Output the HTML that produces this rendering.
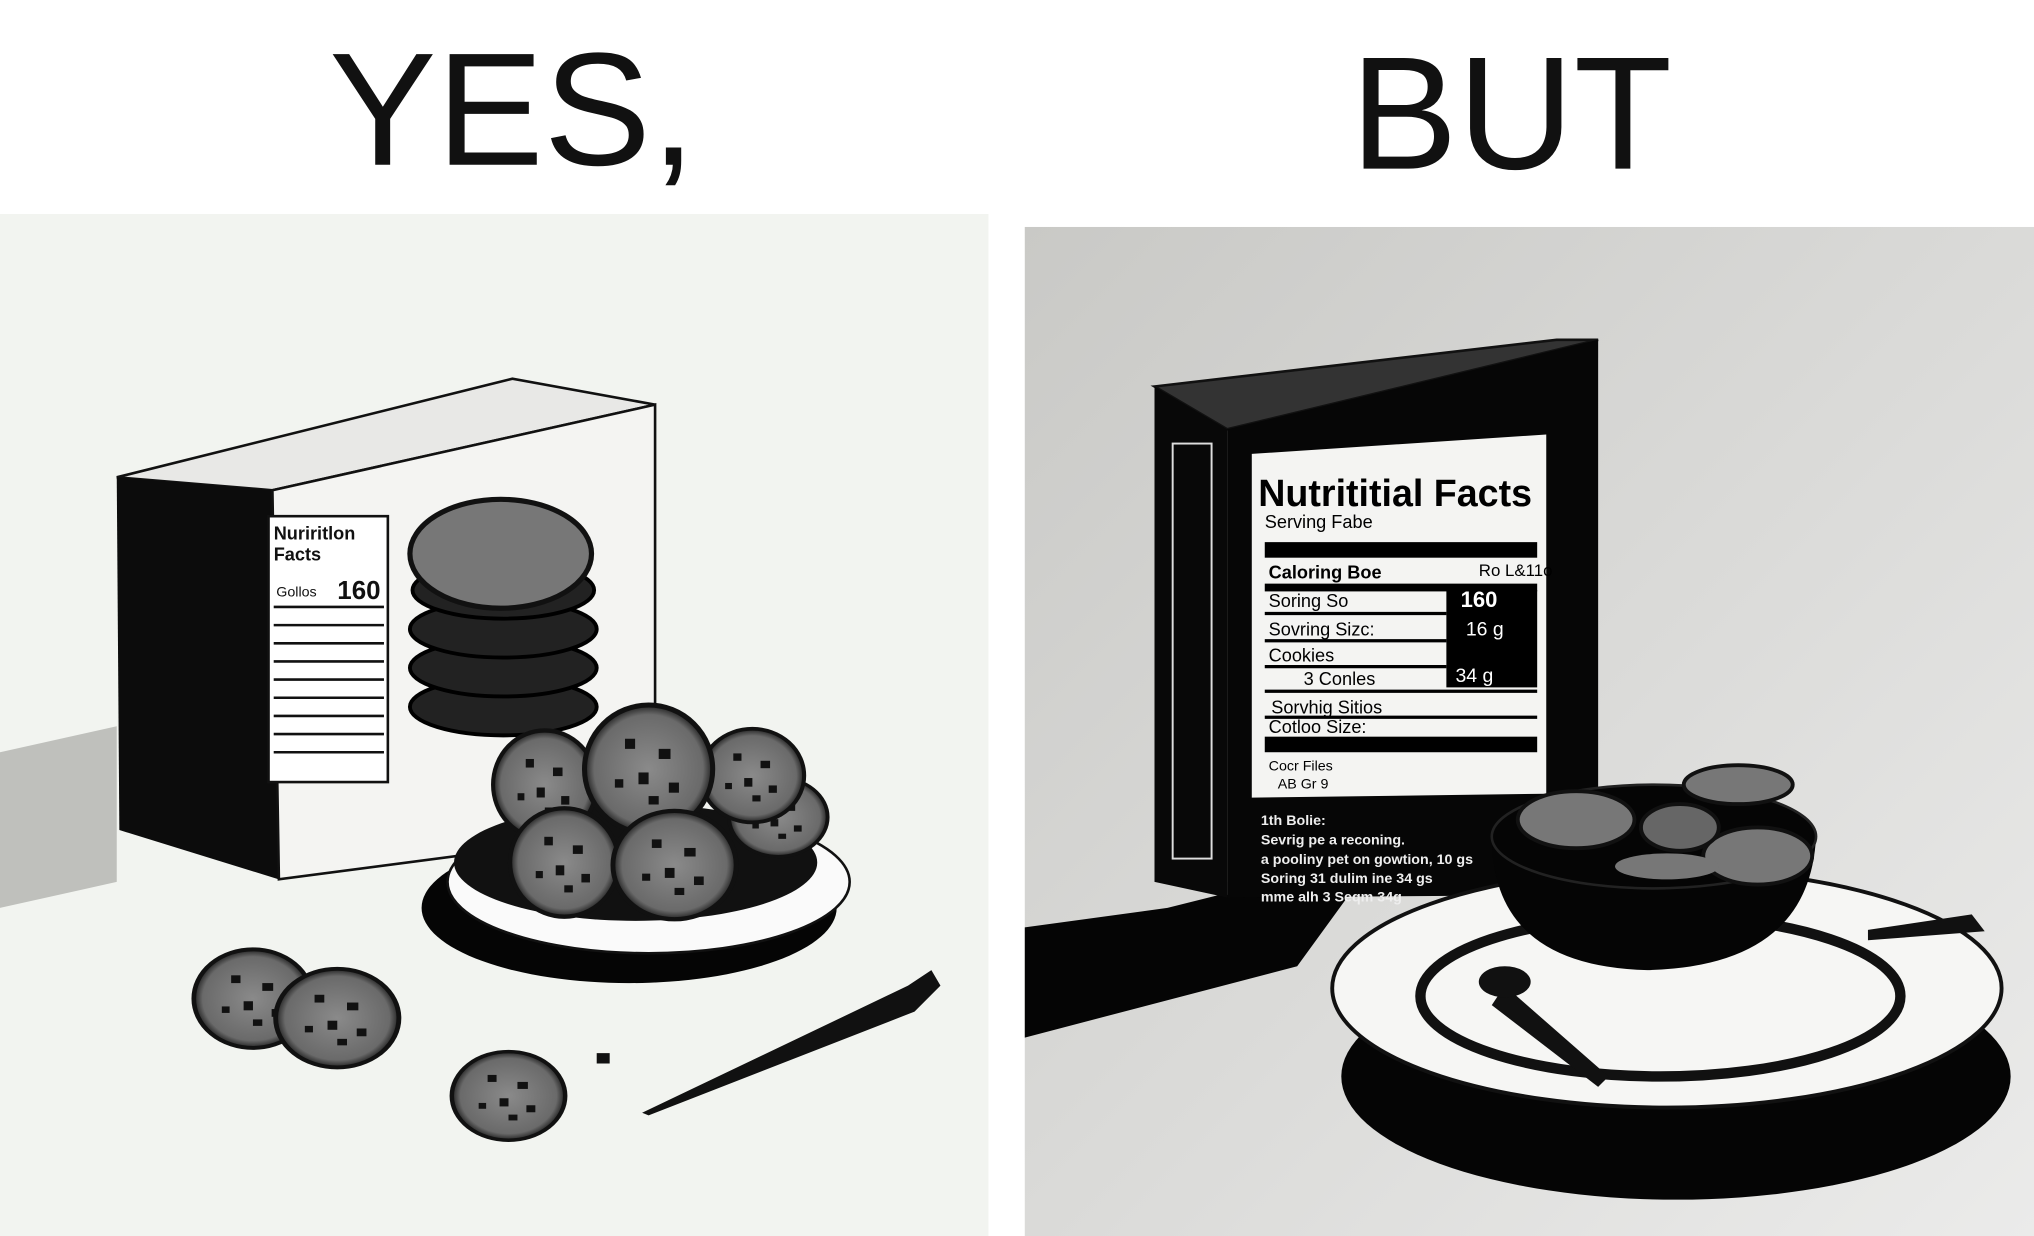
<!DOCTYPE html>
<html><head><meta charset="utf-8"><style>
html,body{margin:0;padding:0;background:#fff;overflow:hidden}
svg{display:block}
</style></head><body>
<svg width="2034" height="1236" viewBox="0 0 1568 953" preserveAspectRatio="none" xmlns="http://www.w3.org/2000/svg" font-family="Liberation Sans, sans-serif">
<defs>
<linearGradient id="rg" x1="0" y1="0" x2="1" y2="1"><stop offset="0" stop-color="#c9c9c6"/><stop offset="1" stop-color="#ebebea"/></linearGradient>
<radialGradient id="ck" cx="0.5" cy="0.5" r="0.5"><stop offset="0" stop-color="#8a8a8a"/><stop offset="0.85" stop-color="#6a6a6a"/><stop offset="1" stop-color="#222"/></radialGradient>
<g id="cookie"><circle r="38" fill="url(#ck)" stroke="#111" stroke-width="3"/><rect x="-14" y="-18" width="6" height="6" fill="#111"/><rect x="6" y="-12" width="7" height="6" fill="#111"/><rect x="-6" y="2" width="6" height="7" fill="#111"/><rect x="12" y="8" width="6" height="6" fill="#111"/><rect x="-20" y="6" width="5" height="5" fill="#111"/><rect x="0" y="16" width="6" height="5" fill="#111"/></g>
</defs>
<rect width="1568" height="953" fill="#fff"/>
<text x="395" y="127" font-size="124" text-anchor="middle" fill="#111">YES,</text>
<text x="1165" y="130" font-size="124" text-anchor="middle" fill="#111">BUT</text>

<rect x="0" y="165" width="762" height="788" fill="#f2f4f0"/>
<polygon points="0,580 90,560 90,680 0,700" fill="#bfc0bc"/>
<polygon points="90,368 395,292 505,312 210,378" fill="#e8e8e6" stroke="#111" stroke-width="2"/>
<polygon points="90,368 210,378 215,678 92,640" fill="#0c0c0c"/>
<polygon points="210,378 505,312 505,640 215,678" fill="#f4f4f2" stroke="#111" stroke-width="2"/>
<rect x="207" y="398" width="92" height="205" fill="#fff" stroke="#111" stroke-width="2"/>
<text x="211" y="416" font-size="14" font-weight="bold" fill="#111">Nuriritlon</text>
<text x="211" y="432" font-size="14" font-weight="bold" fill="#111">Facts</text>
<text x="213" y="460" font-size="11" fill="#111">Gollos</text><text x="260" y="462" font-size="20" font-weight="bold" fill="#111">160</text>
<g stroke="#111" stroke-width="2"><line x1="211" y1="468" x2="296" y2="468"/><line x1="211" y1="482" x2="296" y2="482"/><line x1="211" y1="496" x2="296" y2="496"/><line x1="211" y1="510" x2="296" y2="510"/><line x1="211" y1="524" x2="296" y2="524"/><line x1="211" y1="538" x2="296" y2="538"/><line x1="211" y1="552" x2="296" y2="552"/><line x1="211" y1="566" x2="296" y2="566"/><line x1="211" y1="580" x2="296" y2="580"/></g>
<g fill="#222" stroke="#000" stroke-width="3">
<ellipse cx="388" cy="545" rx="72" ry="22"/><ellipse cx="388" cy="515" rx="72" ry="22"/><ellipse cx="388" cy="485" rx="72" ry="22"/><ellipse cx="388" cy="455" rx="70" ry="22"/></g>
<ellipse cx="386" cy="427" rx="70" ry="42" fill="#777" stroke="#111" stroke-width="4"/>
<ellipse cx="485" cy="700" rx="160" ry="58" fill="#050505"/>
<ellipse cx="500" cy="680" rx="155" ry="55" fill="#fafafa" stroke="#111" stroke-width="2"/>
<ellipse cx="490" cy="665" rx="140" ry="45" fill="#111"/>
<use href="#cookie" transform="translate(420,605) scale(1.05,1.1)"/>
<use href="#cookie" transform="translate(600,630) scale(1,0.8)"/>
<use href="#cookie" transform="translate(580,598) scale(1.05,0.95)"/>
<use href="#cookie" transform="translate(500,593) scale(1.3)"/>
<use href="#cookie" transform="translate(435,665) scale(1.1)"/>
<use href="#cookie" transform="translate(520,667) scale(1.25,1.1)"/>
<use href="#cookie" transform="translate(195,770) scale(1.2,1)"/>
<use href="#cookie" transform="translate(260,785) scale(1.25,1)"/>
<use href="#cookie" transform="translate(392,845) scale(1.15,0.9)"/>
<rect x="460" y="812" width="10" height="8" fill="#111"/>
<polygon points="495,858 700,760 718,748 725,760 705,780 500,860" fill="#111"/>

<rect x="790" y="175" width="778" height="778" fill="url(#rg)"/>
<polygon points="790,715 900,700 940,690 1040,690 1000,745 790,800" fill="#050505"/>
<polygon points="890,298 1200,262 1232,262 946,331" fill="#333" stroke="#111" stroke-width="2"/>
<polygon points="890,298 946,331 946,692 890,680" fill="#080808"/>
<rect x="904" y="342" width="30" height="320" fill="none" stroke="#ddd" stroke-width="1.5"/>
<polygon points="946,331 1232,262 1232,690 946,692" fill="#060606"/>
<polygon points="965,350 1192,335 1192,612 965,615" fill="#f4f4f2"/>
<text x="970" y="390" font-size="29" font-weight="bold" fill="#000">Nutrititial Facts</text>
<text x="975" y="407" font-size="14" fill="#000">Serving Fabe</text>
<rect x="975" y="418" width="210" height="12" fill="#000"/>
<text x="978" y="446" font-size="14" font-weight="bold" fill="#000">Caloring Boe</text>
<text x="1140" y="444" font-size="13" fill="#000">Ro L&amp;11o</text>
<rect x="975" y="450" width="210" height="6" fill="#000"/>
<rect x="1115" y="455" width="70" height="75" fill="#000"/>
<text x="1126" y="468" font-size="17" font-weight="bold" fill="#fff">160</text>
<text x="1130" y="490" font-size="15" fill="#fff">16 g</text>
<text x="1122" y="526" font-size="15" fill="#fff">34 g</text>
<g font-size="14" fill="#000"><text x="978" y="468">Soring So</text><text x="978" y="490">Sovring Sizc:</text><text x="978" y="510">Cookies</text><text x="1005" y="528">3 Conles</text><text x="980" y="550">Sorvhig Sitios</text><text x="978" y="565">Cotloo Size:</text><text x="978" y="594" font-size="11">Cocr Files</text><text x="985" y="608" font-size="11">AB Gr 9</text></g>
<g stroke="#000" stroke-width="2.5"><line x1="975" y1="473" x2="1115" y2="473"/><line x1="975" y1="494" x2="1115" y2="494"/><line x1="975" y1="514" x2="1115" y2="514"/><line x1="975" y1="533" x2="1185" y2="533"/><line x1="975" y1="553" x2="1185" y2="553"/></g>
<rect x="975" y="568" width="210" height="12" fill="#000"/>
<g font-size="11" font-weight="bold" fill="#eee"><text x="972" y="636">1th Bolie:</text><text x="972" y="651">Sevrig pe a reconing.</text><text x="972" y="666">a pooliny pet on gowtion, 10 gs</text><text x="972" y="681">Soring 31 dulim ine 34 gs</text><text x="972" y="695">mme alh 3 Seqm 34g</text></g>
<ellipse cx="1292" cy="830" rx="258" ry="95" fill="#050505"/>
<ellipse cx="1285" cy="762" rx="258" ry="92" fill="#f6f6f4" stroke="#111" stroke-width="3"/>
<ellipse cx="1280" cy="768" rx="185" ry="62" fill="none" stroke="#111" stroke-width="8"/>
<polygon points="1440,717 1520,705 1530,718 1440,725" fill="#111"/>
<polygon points="1160,760 1240,830 1232,838 1150,775" fill="#111"/>
<ellipse cx="1160" cy="757" rx="20" ry="12" fill="#111"/>
<path d="M1150,645 Q1150,745 1270,748 Q1395,745 1400,645 Z" fill="#050505"/>
<ellipse cx="1275" cy="645" rx="125" ry="40" fill="#050505" stroke="#222" stroke-width="2"/>
<ellipse cx="1215" cy="632" rx="45" ry="22" fill="#777" stroke="#111" stroke-width="3"/>
<ellipse cx="1340" cy="605" rx="42" ry="15" fill="#777" stroke="#111" stroke-width="3"/>
<ellipse cx="1355" cy="660" rx="42" ry="22" fill="#777" stroke="#111" stroke-width="3"/>
<ellipse cx="1295" cy="638" rx="30" ry="18" fill="#666" stroke="#111" stroke-width="3"/>
<ellipse cx="1285" cy="668" rx="40" ry="10" fill="#777"/>
</svg>
</body></html>
